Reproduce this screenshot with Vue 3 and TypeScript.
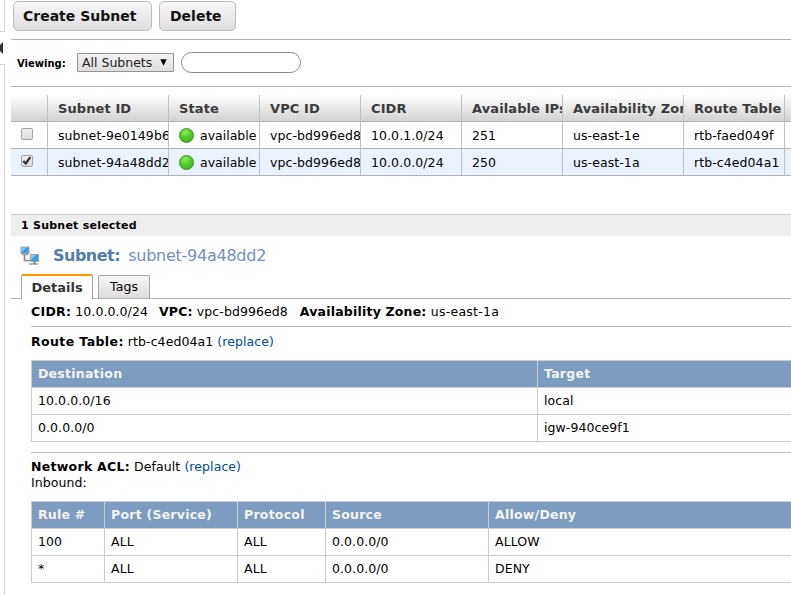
<script setup lang="ts">
import { ref } from 'vue'

interface Subnet {
  id: string
  vpc: string
  cidr: string
  ips: number
  zone: string
  routeTable: string
  selected: boolean
}

const columns = ['', 'Subnet ID', 'State', 'VPC ID', 'CIDR', 'Available IPs', 'Availability Zone', 'Route Table', '']
const subnets = ref<Subnet[]>([
  { id: 'subnet-9e0149b6', vpc: 'vpc-bd996ed8', cidr: '10.0.1.0/24', ips: 251, zone: 'us-east-1e', routeTable: 'rtb-faed049f', selected: false },
  { id: 'subnet-94a48dd2', vpc: 'vpc-bd996ed8', cidr: '10.0.0.0/24', ips: 250, zone: 'us-east-1a', routeTable: 'rtb-c4ed04a1', selected: true },
])
const routes = [
  ['10.0.0.0/16', 'local'],
  ['0.0.0.0/0', 'igw-940ce9f1'],
]
const aclHead = ['Rule #', 'Port (Service)', 'Protocol', 'Source', 'Allow/Deny']
const aclRules = [
  ['100', 'ALL', 'ALL', '0.0.0.0/0', 'ALLOW'],
  ['*', 'ALL', 'ALL', '0.0.0.0/0', 'DENY'],
]
</script>

<template>
  <div class="page">
    <aside class="splitter">
      <div class="pane pane-top"></div>
      <svg class="collapse" width="4" height="12" viewBox="0 0 4 12"><path d="M3 0V12L-3 6Z" fill="#333" /></svg>
      <div class="pane pane-bottom"></div>
    </aside>
    <main class="content">
      <div class="actions">
        <button class="action create">Create Subnet</button>
        <button class="action delete">Delete</button>
      </div>
      <div class="filter">
        <span class="viewing">Viewing:</span>
        <div class="select"><span>All Subnets</span><svg width="7" height="7" viewBox="0 0 7 7"><path d="M.3 .3H6.7L3.5 6.7Z" fill="#000" /></svg></div>
        <input class="search" type="text" />
      </div>

      <div class="subnets">
        <div class="row head"><div v-for="(c, i) in columns" :key="i" class="cell">{{ c }}</div></div>
        <div v-for="s in subnets" :key="s.id" class="row" :class="{ selected: s.selected }">
          <div class="cell check">
            <span class="box" @click="s.selected = !s.selected">
              <svg v-if="s.selected" width="12" height="12" viewBox="0 0 12 12"><path d="M2.3 6L4.8 8.5L9.3 2.2" fill="none" stroke="#333" stroke-width="2.3" /></svg>
            </span>
          </div>
          <div class="cell">{{ s.id }}</div>
          <div class="cell state"><i class="dot"></i>available</div>
          <div class="cell">{{ s.vpc }}</div>
          <div class="cell">{{ s.cidr }}</div>
          <div class="cell">{{ s.ips }}</div>
          <div class="cell">{{ s.zone }}</div>
          <div class="cell">{{ s.routeTable }}</div>
          <div class="cell"></div>
        </div>
      </div>

      <div class="summary">1 Subnet selected</div>
      <div class="title">
        <svg class="net" width="20" height="20" viewBox="0 0 20 20">
          <path d="M4.5 7V14.5H11" fill="none" stroke="#888" stroke-width="1.6" />
          <path d="M2 8.5H8M9 18H18" stroke="#999" stroke-width="1.6" />
          <rect x="1" y="1" width="8" height="6.5" fill="#3b9be8" stroke="#aaa49d" />
          <path d="M1.5 1.5H6L2 6H1.5Z" fill="#83c8f7" />
          <rect x="10.5" y="8.5" width="8" height="7" fill="#3b9be8" stroke="#aaa49d" />
          <path d="M11 9H15.5L11.5 13.5H11Z" fill="#83c8f7" />
          <path d="M14.5 15.5V18" stroke="#888" stroke-width="2" />
        </svg>
        <b>Subnet:</b><span class="name">subnet-94a48dd2</span>
      </div>
      <nav class="tabs">
        <div class="tab active">Details</div>
        <div class="tab tags">Tags</div>
      </nav>

      <section class="details">
        <div class="facts">
          <span><b>CIDR:</b> 10.0.0.0/24</span>
          <span><b>VPC:</b> vpc-bd996ed8</span>
          <span><b>Availability Zone:</b> us-east-1a</span>
        </div>
        <div class="line route"><b>Route Table:</b> rtb-c4ed04a1 <a>(replace)</a></div>
        <div class="grid routes">
          <div class="grow ghead"><div>Destination</div><div>Target</div></div>
          <div v-for="r in routes" :key="r[0]" class="grow"><div v-for="c in r" :key="c">{{ c }}</div></div>
        </div>
        <div class="acl-info">
          <div class="line"><b>Network ACL:</b> Default <a>(replace)</a></div>
          <div class="line">Inbound:</div>
        </div>
        <div class="grid acl">
          <div class="grow ghead"><div v-for="h in aclHead" :key="h">{{ h }}</div></div>
          <div v-for="r in aclRules" :key="r[0]" class="grow"><div v-for="(c, i) in r" :key="i">{{ c }}</div></div>
        </div>
      </section>
    </main>
  </div>
</template>

<style>
body { background: #fff; overflow: hidden; }
</style>

<style scoped>
* { box-sizing: border-box; }
.page { display: flex; width: 791px; height: 595px; overflow: hidden; font: 12.5px/16px "DejaVu Sans", sans-serif; letter-spacing: .08px; color: #000; white-space: nowrap; }
.splitter { width: 11px; flex: none; display: flex; flex-direction: column; }
.pane { width: 5px; border-right: 1px solid #d4d4d4; }
.pane-top { height: 32px; border-bottom: 1px solid #d4d4d4; }
.collapse { margin: 10px 0; display: block; }
.pane-bottom { flex: 1; border-top: 1px solid #d4d4d4; }
.content { flex: 1; min-width: 0; overflow: hidden; }
.actions { display: flex; gap: 7px; height: 40px; padding: 1px 0 0 2px; border-bottom: 1px solid #b3b3b3; }
.action { height: 30px; padding: 0 0 1px 9px; border: 1px solid #bbb; border-radius: 5px; background: linear-gradient(#f6f6f6, #dfdfdf); font: bold 14px "DejaVu Sans", sans-serif; letter-spacing: 0; text-align: left; color: #111; }
.create { width: 139px; }
.delete { width: 77px; padding-left: 10px; }
.filter { display: flex; height: 47px; padding: 12px 0 0 6px; border-bottom: 1px solid #b3b3b3; }
.viewing { width: 60px; padding-top: 4px; font-size: 10px; line-height: 15px; font-weight: bold; letter-spacing: 0; }
.select { display: flex; justify-content: space-between; width: 97px; height: 19px; margin-top: 1px; padding: 0 6px 0 4px; border: 1px solid #949494; border-radius: 1px; background: linear-gradient(#f2f2f2, #dedede); color: #222; font-size: 12.5px; line-height: 18px; letter-spacing: 0; }
.select svg { margin-top: 5px; }
.search { width: 120px; height: 21px; margin-left: 7px; border: 1px solid #888; border-radius: 11px; background: #fff; outline: none; }
.subnets { margin-top: 8px; }
.row { display: grid; grid-template-columns: 37px 121px 91px 101px 101px 101px 121px 101px 20px; height: 27px; border-bottom: 1px solid #b3b3b3; }
.row.selected { background: #eaf2fe; }
.head { background: linear-gradient(#fff, #d2d2d2); color: #3b3b3b; font-weight: bold; }
.cell { overflow: hidden; padding: 6px 0 0 10px; border-right: 1px solid #c0c0c0; }
.head .cell { font-size: 13px; letter-spacing: .1px; }
.box { display: block; width: 12px; height: 12px; border: 1px solid #a5a5a5; border-radius: 2px; background: linear-gradient(#eee, #dcdcdc); }
.box svg { display: block; margin: -1px; }
.state { display: flex; gap: 6px; letter-spacing: 0; }
.dot { flex: none; width: 15px; height: 15px; border: 1px solid #38911e; border-radius: 50%; background: radial-gradient(circle at 40% 25%, #8fec5b, #51cc29 45%, #38ad1b); }
.summary { height: 22px; margin-top: 38px; padding: 3px 0 0 10px; border-top: 1px solid #ccc; background: #ededed; font-size: 11px; font-weight: bold; letter-spacing: .24px; }
.title { display: flex; height: 38px; padding: 10px 0 0 9px; color: #557cac; font-size: 16px; line-height: 19px; letter-spacing: -.25px; }
.title b { letter-spacing: -.5px; }
.net { margin-right: 13px; }
.name { margin-left: 8px; color: #7390b9; }
.tabs { display: flex; gap: 5px; height: 25px; padding-left: 10px; align-items: flex-end; border-bottom: 1px solid #b3b3b3; }
.tab { border: 1px solid #a5a5a5; border-bottom: 0; text-align: center; }
.active { width: 72px; height: 25px; margin-bottom: -1px; padding-top: 4px; border-top: 2px solid #f90; border-radius: 2px 2px 0 0; background: #fff; color: #333; font-size: 13px; font-weight: bold; letter-spacing: 0; }
.tags { width: 52px; height: 23px; padding-top: 3px; border-radius: 2px 2px 0 0; background: linear-gradient(#f6f6f6, #dedede); }
.details { padding-left: 20px; }
.facts { display: flex; gap: 11px; height: 28px; padding-top: 5px; border-bottom: 1px solid #bbb; }
.facts span + span b { letter-spacing: .2px; }
.facts span:last-child { padding-left: 1px; letter-spacing: .25px; }
b { font-weight: bold; letter-spacing: .28px; }
a { color: #004b91; }
.route { height: 33px; padding-top: 7px; }
.route b { letter-spacing: .4px; }
.grid { width: 900px; border: 1px solid #ccc; border-bottom: 0; }
.grow { display: grid; height: 27px; border-bottom: 1px solid #ccc; }
.grow > div { padding: 5px 0 0 6px; border-right: 1px solid #ccc; }
.routes .grow { grid-template-columns: 506px 1fr; }
.acl .grow { grid-template-columns: 73px 133px 88px 163px 1fr; }
.ghead { background: #7e9bc2; color: #f4f4f0; font-weight: bold; letter-spacing: .24px; }
.acl-info { height: 49px; margin-top: 10px; padding-top: 6px; border-top: 1px solid #bbb; }
</style>
